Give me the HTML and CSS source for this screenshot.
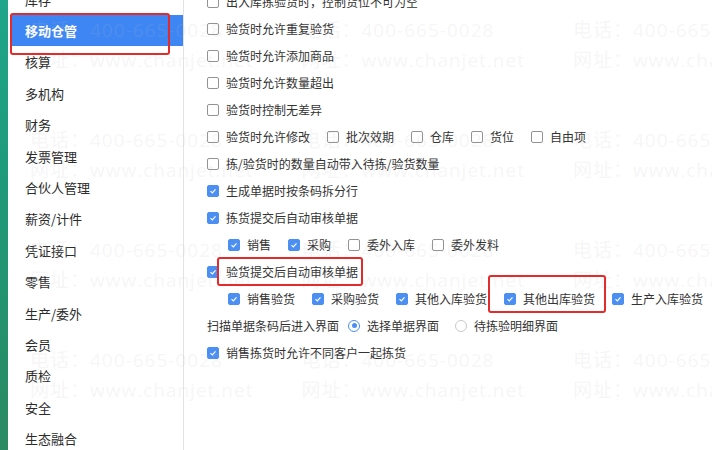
FILE: index.html
```html
<!DOCTYPE html>
<html lang="zh-CN">
<head>
<meta charset="utf-8">
<title>移动仓管</title>
<link rel="stylesheet" href="styles.css">
</head>
<body>
<div class="app">
  <div class="edge"></div>
  <nav class="sidebar">
    <ul class="menu">
      <li class="item">库存</li>
      <li class="item active">移动仓管</li>
      <li class="item">核算</li>
      <li class="item">多机构</li>
      <li class="item">财务</li>
      <li class="item">发票管理</li>
      <li class="item">合伙人管理</li>
      <li class="item">薪资/计件</li>
      <li class="item">凭证接口</li>
      <li class="item">零售</li>
      <li class="item">生产/委外</li>
      <li class="item">会员</li>
      <li class="item">质检</li>
      <li class="item">安全</li>
      <li class="item">生态融合</li>
    </ul>
  </nav>
  <main class="main">
    <div class="row"><label class="opt"><span class="cb"></span>出入库拣验货时，控制货位不可为空</label></div>
    <div class="row"><label class="opt"><span class="cb"></span>验货时允许重复验货</label></div>
    <div class="row"><label class="opt"><span class="cb"></span>验货时允许添加商品</label></div>
    <div class="row"><label class="opt"><span class="cb"></span>验货时允许数量超出</label></div>
    <div class="row"><label class="opt"><span class="cb"></span>验货时控制无差异</label></div>
    <div class="row">
      <label class="opt"><span class="cb"></span>验货时允许修改</label>
      <label class="opt"><span class="cb"></span>批次效期</label>
      <label class="opt"><span class="cb"></span>仓库</label>
      <label class="opt"><span class="cb"></span>货位</label>
      <label class="opt"><span class="cb"></span>自由项</label>
    </div>
    <div class="row"><label class="opt"><span class="cb"></span>拣/验货时的数量自动带入待拣/验货数量</label></div>
    <div class="row"><label class="opt"><span class="cb on"><svg viewBox="0 0 12 12"><polyline points="3,6.2 5.2,8.3 9,4"/></svg></span>生成单据时按条码拆分行</label></div>
    <div class="row"><label class="opt"><span class="cb on"><svg viewBox="0 0 12 12"><polyline points="3,6.2 5.2,8.3 9,4"/></svg></span>拣货提交后自动审核单据</label></div>
    <div class="row sub">
      <label class="opt"><span class="cb on"><svg viewBox="0 0 12 12"><polyline points="3,6.2 5.2,8.3 9,4"/></svg></span>销售</label>
      <label class="opt"><span class="cb on"><svg viewBox="0 0 12 12"><polyline points="3,6.2 5.2,8.3 9,4"/></svg></span>采购</label>
      <label class="opt"><span class="cb"></span>委外入库</label>
      <label class="opt"><span class="cb"></span>委外发料</label>
    </div>
    <div class="row"><label class="opt"><span class="cb on"><svg viewBox="0 0 12 12"><polyline points="3,6.2 5.2,8.3 9,4"/></svg></span>验货提交后自动审核单据</label></div>
    <div class="row sub">
      <label class="opt"><span class="cb on"><svg viewBox="0 0 12 12"><polyline points="3,6.2 5.2,8.3 9,4"/></svg></span>销售验货</label>
      <label class="opt"><span class="cb on"><svg viewBox="0 0 12 12"><polyline points="3,6.2 5.2,8.3 9,4"/></svg></span>采购验货</label>
      <label class="opt"><span class="cb on"><svg viewBox="0 0 12 12"><polyline points="3,6.2 5.2,8.3 9,4"/></svg></span>其他入库验货</label>
      <label class="opt"><span class="cb on"><svg viewBox="0 0 12 12"><polyline points="3,6.2 5.2,8.3 9,4"/></svg></span>其他出库验货</label>
      <label class="opt"><span class="cb on"><svg viewBox="0 0 12 12"><polyline points="3,6.2 5.2,8.3 9,4"/></svg></span>生产入库验货</label>
    </div>
    <div class="row radios">
      <span class="caption">扫描单据条码后进入界面</span>
      <label class="opt"><span class="rd on"></span>选择单据界面</label>
      <label class="opt"><span class="rd"></span>待拣验明细界面</label>
    </div>
    <div class="row"><label class="opt"><span class="cb on"><svg viewBox="0 0 12 12"><polyline points="3,6.2 5.2,8.3 9,4"/></svg></span>销售拣货时允许不同客户一起拣货</label></div>
  </main>
</div>

<div class="watermark">
  <div class="wm"><span>电话：400-665-0028</span><span>网址：www.chanjet.net</span></div>
  <div class="wm"><span>电话：400-665-0028</span><span>网址：www.chanjet.net</span></div>
  <div class="wm"><span>电话：400-665-0028</span><span>网址：www.chanjet.net</span></div>
  <div class="wm"><span>电话：400-665-0028</span><span>网址：www.chanjet.net</span></div>
  <div class="wm"><span>电话：400-665-0028</span><span>网址：www.chanjet.net</span></div>
  <div class="wm"><span>电话：400-665-0028</span><span>网址：www.chanjet.net</span></div>
  <div class="wm"><span>电话：400-665-0028</span><span>网址：www.chanjet.net</span></div>
  <div class="wm"><span>电话：400-665-0028</span><span>网址：www.chanjet.net</span></div>
  <div class="wm"><span>电话：400-665-0028</span><span>网址：www.chanjet.net</span></div>
  <div class="wm"><span>电话：400-665-0028</span><span>网址：www.chanjet.net</span></div>
  <div class="wm"><span>电话：400-665-0028</span><span>网址：www.chanjet.net</span></div>
  <div class="wm"><span>电话：400-665-0028</span><span>网址：www.chanjet.net</span></div>
</div>

<div class="mark mark-nav"></div>
<div class="mark mark-audit"></div>
<div class="mark mark-out"></div>
</body>
</html>
```

FILE: styles.css
```css
* { box-sizing: border-box; }

html, body {
  margin: 0;
  padding: 0;
  width: 712px;
  height: 450px;
  overflow: hidden;
  background: #ffffff;
  font-family: "Noto Sans CJK SC", "Noto Sans", sans-serif;
  color: #333333;
}

body { position: relative; }

.app {
  display: flex;
  width: 712px;
  height: 450px;
}

.edge {
  width: 8px;
  flex: none;
  background: linear-gradient(180deg, #1fa58a 0%, #1e9a7a 40%, #2a8a62 100%);
}

.sidebar {
  width: 176px;
  flex: none;
  padding-left: 2px;
  border-right: 1px solid #e3e3e3;
  background: #ffffff;
}

.menu {
  list-style: none;
  margin: -16.5px 0 0 0;
  padding: 0;
}

.item {
  height: 31.4px;
  display: flex;
  align-items: center;
  padding-left: 15px;
  font-size: 13px;
  color: #2b2b2b;
}

.item.active {
  background: #3d86f4;
  color: #ffffff;
  font-weight: 700;
}

.main {
  flex: 1;
  min-width: 0;
  padding: 0 0 0 23px;
  margin-top: -12px;
  font-size: 12px;
}

.row {
  height: 27px;
  display: flex;
  align-items: center;
  gap: 17px;
  white-space: nowrap;
}

.row.sub { padding-left: 21px; }

.opt {
  display: flex;
  align-items: center;
  gap: 7px;
}

.cb {
  width: 12px;
  height: 12px;
  flex: none;
  border: 1px solid #939393;
  border-radius: 2px;
  background: #ffffff;
  display: flex;
}

.cb.on {
  border-color: #4b8ff2;
  background: #4b8ff2;
}

.cb svg {
  width: 10px;
  height: 10px;
  fill: none;
  stroke: #ffffff;
  stroke-width: 1.4;
}

.radios { gap: 16px; }
.radios .caption { margin-right: -7px; }

.rd {
  width: 12px;
  height: 12px;
  flex: none;
  border: 1px solid #c9c9c9;
  border-radius: 50%;
  background: #ffffff;
  display: flex;
  align-items: center;
  justify-content: center;
}

.rd.on { border-color: #4b8ff2; }

.rd.on::after {
  content: "";
  width: 5px;
  height: 5px;
  border-radius: 50%;
  background: #4b8ff2;
}

.watermark {
  position: absolute;
  left: 30px;
  top: 15px;
  display: grid;
  grid-template-columns: repeat(3, 271.5px);
  grid-auto-rows: 110px;
  pointer-events: none;
}

.wm {
  display: flex;
  flex-direction: column;
  font-family: "Open Sans", "Noto Sans CJK SC", sans-serif;
  font-size: 19px;
  line-height: 30px;
  letter-spacing: 1px;
  color: rgba(190, 190, 190, 0.15);
  white-space: nowrap;
}

.mark {
  position: absolute;
  border: 2.5px solid #e42b2b;
  border-radius: 3px;
  pointer-events: none;
}

.mark-nav { left: 10px; top: 13px; width: 160px; height: 42px; }
.mark-audit { left: 217px; top: 257px; width: 146px; height: 29px; }
.mark-out { left: 488px; top: 275px; width: 118px; height: 38px; }
```
